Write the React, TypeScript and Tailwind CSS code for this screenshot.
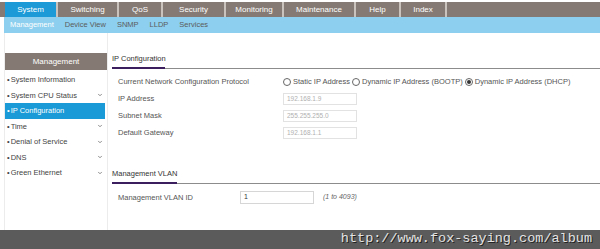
import { ChevronDown } from "lucide-react";

const tabs = [
  { label: "System", w: "w-[53px]", active: true },
  { label: "Switching", w: "w-[61px]" },
  { label: "QoS", w: "w-[44px]" },
  { label: "Security", w: "w-[63px]" },
  { label: "Monitoring", w: "w-[58px]" },
  { label: "Maintenance", w: "w-[72px]" },
  { label: "Help", w: "w-[45px]" },
  { label: "Index", w: "w-[46px]" },
];

const subTabs = ["Management", "Device View", "SNMP", "LLDP", "Services"];

const sideItems = [
  { label: "System Information" },
  { label: "System CPU Status", chevron: true },
  { label: "IP Configuration", active: true },
  { label: "Time", chevron: true },
  { label: "Denial of Service", chevron: true },
  { label: "DNS", chevron: true },
  { label: "Green Ethernet", chevron: true },
];

function SectionTitle({ title, underline }: { title: string; underline: string }) {
  return (
    <div className="relative border-b border-[#8c8c8c] pb-[4px] text-[7.5px] text-[#333]">
      <span>{title}</span>
      <div className={`absolute bottom-[-1px] left-0 h-[2px] bg-[#3a1e5e] ${underline}`} />
    </div>
  );
}

function Radio({ label, checked }: { label: string; checked?: boolean }) {
  return (
    <span className="flex items-center gap-[2px] whitespace-nowrap">
      <span className="flex h-[8px] w-[8px] items-center justify-center rounded-full border border-[#666] bg-white">
        {checked && <span className="h-[4px] w-[4px] rounded-full bg-[#333]" />}
      </span>
      <span>{label}</span>
    </span>
  );
}

function Field({ value }: { value: string }) {
  return (
    <div className="flex h-[12px] w-[74px] items-center border border-[#e2e2e2] px-[3px] text-[6.5px] text-[#b0b0b0]">
      {value}
    </div>
  );
}

export default function App() {
  return (
    <div
      className="flex h-[249px] w-[600px] flex-col overflow-hidden bg-white"
      style={{ fontFamily: '"Liberation Sans", Arial, sans-serif' }}
    >
      <div className="mt-[2px] flex h-[15px] bg-[#867b74] pl-[5px]">
        {tabs.map((t) => (
          <div
            key={t.label}
            className={`flex ${t.w} items-center justify-center border-r-2 border-[#c9c2bd] text-[8px] text-white ${
              t.active ? "bg-[#1b9ad7]" : ""
            }`}
          >
            {t.label}
          </div>
        ))}
      </div>
      <div className="ml-[4px] flex h-[16px] items-center gap-[11px] bg-[#8ccfee] pl-[6px] text-[7.5px]">
        {subTabs.map((s, i) => (
          <span key={s} className={i === 0 ? "text-white" : "text-[#5c5c5c]"}>
            {s}
          </span>
        ))}
      </div>

      <div className="flex flex-1">
        <div className="ml-[4px] w-[104px] border-l border-r border-[#ececec] pt-[20px]">
          <div className="flex h-[17px] items-center justify-center bg-[#857a73] text-[8px] text-white">
            Management
          </div>
          <div className="mt-[2px] flex flex-col text-[7.5px] text-[#444]">
            {sideItems.map((it) => (
              <div
                key={it.label}
                className={`flex h-[15.5px] items-center justify-between pl-[2px] pr-[4px] ${
                  it.active ? "mr-[2px] bg-[#1a9ad6] text-white" : ""
                }`}
              >
                <span>
                  <span className="mr-[1px]">•</span>
                  {it.label}
                </span>
                {it.chevron && <ChevronDown size={6} strokeWidth={3} className="text-[#666]" />}
              </div>
            ))}
          </div>
        </div>

        <div className="flex-1 pl-[4px] pt-[20px] text-[7.5px] text-[#555]">
          <SectionTitle title="IP Configuration" underline="w-[53px]" />
          <div className="mt-[7px] grid grid-cols-[165px_1fr] items-center gap-y-[5px] pl-[6px]">
            <span>Current Network Configuration Protocol</span>
            <div className="flex gap-[2px]">
              <Radio label="Static IP Address" />
              <Radio label="Dynamic IP Address (BOOTP)" />
              <Radio label="Dynamic IP Address (DHCP)" checked />
            </div>
            <span>IP Address</span>
            <Field value="192.168.1.9" />
            <span>Subnet Mask</span>
            <Field value="255.255.255.0" />
            <span>Default Gateway</span>
            <Field value="192.168.1.1" />
          </div>

          <div className="mt-[29px]">
            <SectionTitle title="Management VLAN" underline="w-[65px]" />
          </div>
          <div className="mt-[7px] flex items-center pl-[6px]">
            <span className="w-[122px]">Management VLAN ID</span>
            <div className="flex h-[13px] w-[74px] items-center border border-[#d6d6d6] px-[3px] text-[7px] text-[#333]">
              1
            </div>
            <span className="ml-[9px] text-[7px] italic text-[#666]">(1 to 4093)</span>
          </div>
        </div>
      </div>

      <div className="flex h-[19px] items-center justify-end bg-[#5b5b5b] pr-[8px]">
        <span
          className="text-[13.5px] text-[#e4e4e4]"
          style={{ fontFamily: '"Liberation Mono", "Courier New", monospace', textShadow: "1px 1px 0 #222" }}
        >
          http://www.fox-saying.com/album
        </span>
      </div>
    </div>
  );
}
